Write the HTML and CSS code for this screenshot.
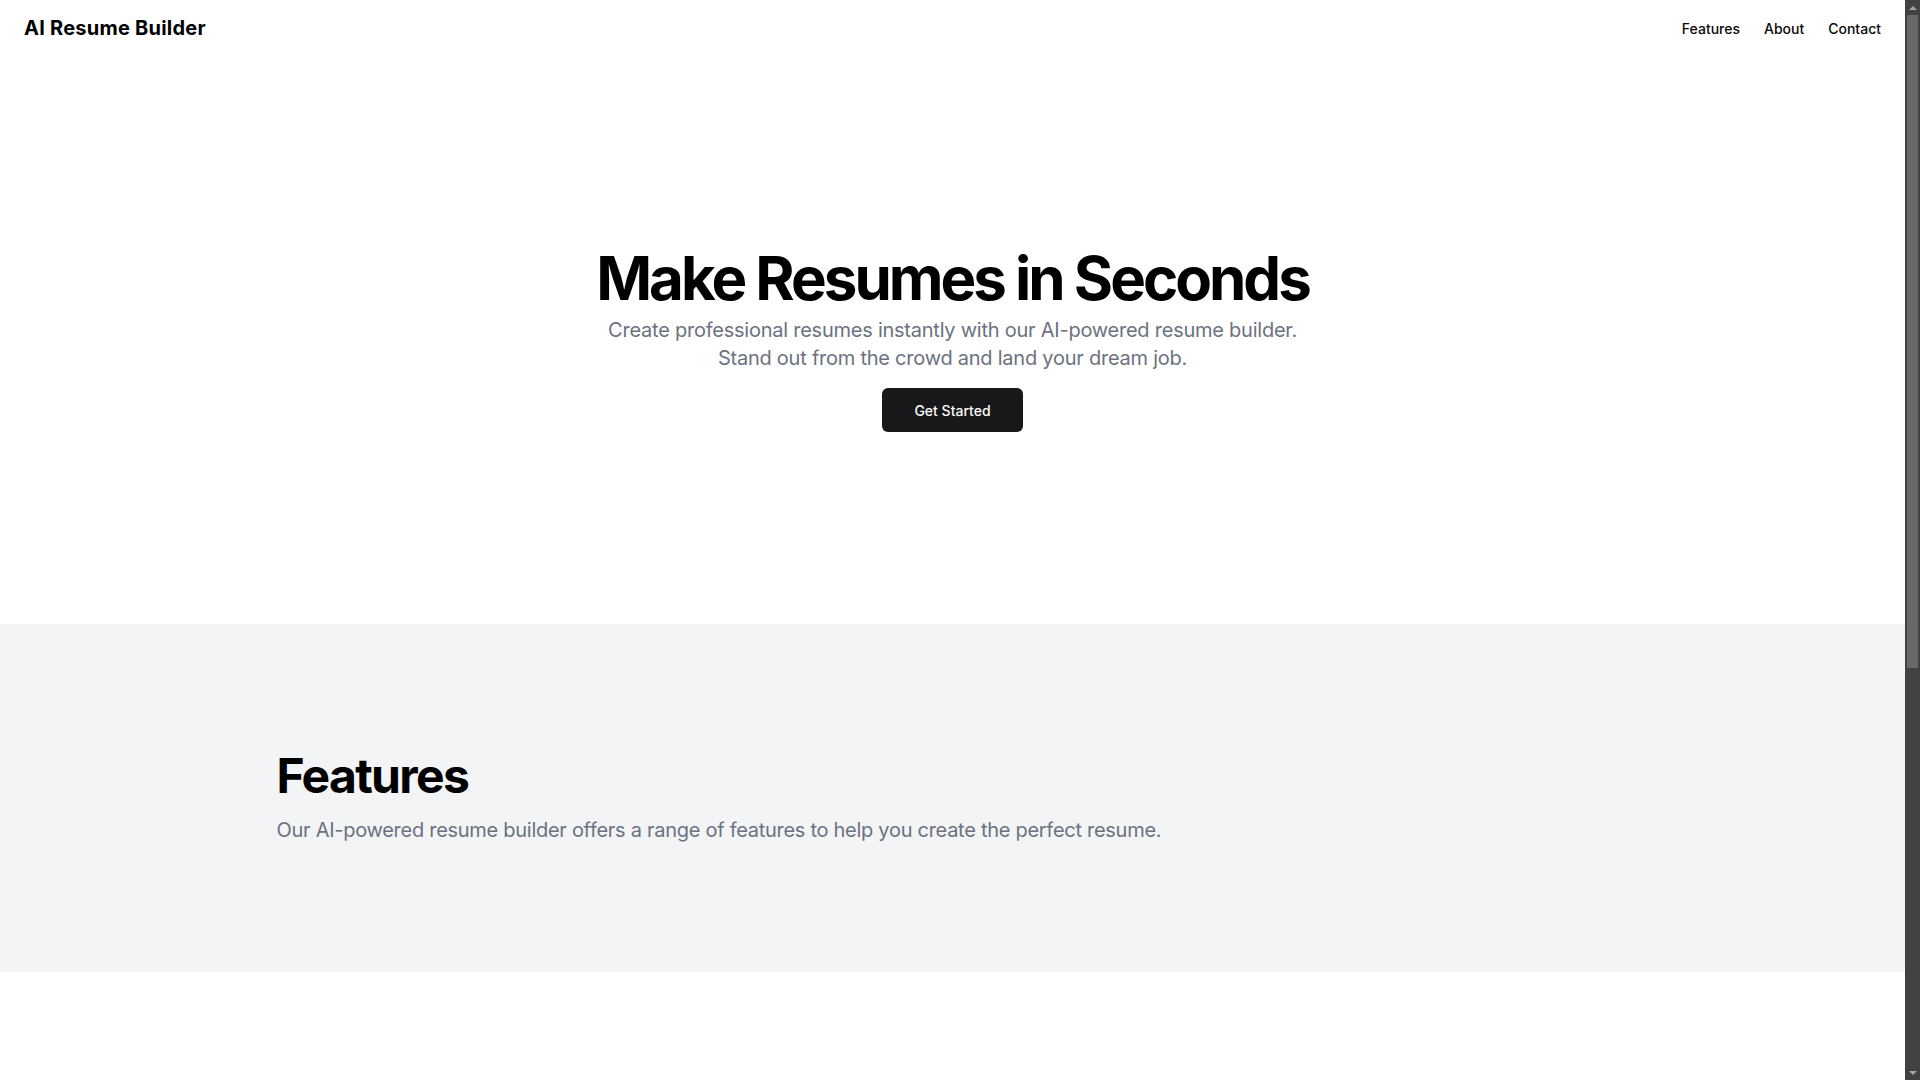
FILE: index.html
```html
<!DOCTYPE html>
<html lang="en">
<head>
<meta charset="utf-8">
<title>AI Resume Builder</title>
<link rel="stylesheet" href="styles.css">
</head>
<body>
<header class="site-header">
  <a class="logo" href="#">AI Resume Builder</a>
  <nav class="nav">
    <a href="#features">Features</a>
    <a href="#about">About</a>
    <a href="#contact">Contact</a>
  </nav>
</header>
<main>
  <section class="hero">
    <div class="container hero-inner">
      <div class="hero-text">
        <h1>Make Resumes in Seconds</h1>
        <p>Create professional resumes instantly with our AI-powered resume builder. Stand out from the crowd and land your dream job.</p>
      </div>
      <a class="btn" href="#">Get Started</a>
    </div>
  </section>
  <section class="features" id="features">
    <div class="container features-inner">
      <h2>Features</h2>
      <p>Our AI-powered resume builder offers a range of features to help you create the perfect resume.</p>
    </div>
  </section>
  <section class="about" id="about"></section>
</main>
<div class="scrollbar" aria-hidden="true">
  <div class="sb-arrow sb-up"></div>
  <div class="sb-track">
    <div class="sb-thumb"></div>
  </div>
  <div class="sb-arrow sb-down"></div>
</div>
</body>
</html>
```
FILE: styles.css
```css
* { box-sizing: border-box; }
html {
  background: #fff;
}
html, body { margin: 0; padding: 0; }
body {
  font-family: Inter, "Noto Sans", sans-serif;
  color: #09090b;
  background: #fff;
  margin-right: 15px;
}
a { color: inherit; text-decoration: none; }
.site-header {
  height: 56px;
  display: flex;
  align-items: center;
  padding: 0 24px;
}
.logo {
  font-size: 20px;
  font-weight: 700;
  letter-spacing: 0.012em;
  color: #000;
}
.nav {
  margin-left: auto;
  display: flex;
  gap: 24px;
}
.nav a {
  font-size: 14px;
  font-weight: 500;
  color: #09090b;
}
.container {
  max-width: 1400px;
  margin: 0 auto;
  padding: 0 24px;
}
.hero {
  padding: 192px 0;
}
.hero-inner {
  display: flex;
  flex-direction: column;
  align-items: center;
  gap: 16px;
  text-align: center;
}
.hero-text {
  display: flex;
  flex-direction: column;
  align-items: center;
  gap: 8px;
}
.hero h1 {
  margin: 0;
  font-size: 60px;
  line-height: 1;
  font-weight: 700;
  letter-spacing: -0.05em;
  color: #000;
}
.hero p {
  margin: 0;
  max-width: 700px;
  font-size: 20px;
  line-height: 28px;
  letter-spacing: -0.012em;
  color: #6b7280;
}
.btn {
  display: inline-flex;
  align-items: center;
  justify-content: center;
  height: 44px;
  padding: 0 32px;
  border-radius: 6px;
  background: #18181b;
  color: #fafafa;
  font-size: 14px;
  font-weight: 500;
}
.features {
  background: #f3f4f6;
  padding: 128px 0;
}
.features-inner {
  display: flex;
  flex-direction: column;
  gap: 16px;
}
.features h2 {
  margin: 0;
  font-size: 48px;
  line-height: 1;
  font-weight: 700;
  letter-spacing: -0.035em;
  color: #000;
}
.features p {
  margin: 0;
  max-width: 900px;
  font-size: 20px;
  line-height: 28px;
  letter-spacing: -0.014em;
  color: #6b7280;
}
.about {
  height: 764px;
  background: #fff;
}

/* simulated browser scrollbar */
.scrollbar {
  position: fixed;
  top: 0;
  right: 0;
  bottom: 0;
  width: 15px;
  background: #424242;
  display: flex;
  flex-direction: column;
}
.sb-arrow {
  height: 15px;
  flex: none;
  display: flex;
  justify-content: center;
  align-items: center;
}
.sb-up::before,
.sb-down::before {
  content: "";
  width: 0;
  height: 0;
  border-left: 4px solid transparent;
  border-right: 4px solid transparent;
}
.sb-up::before {
  border-bottom: 4px solid #a3a3a3;
}
.sb-down::before {
  border-top: 4px solid #a3a3a3;
}
.sb-track {
  flex: 1;
  padding: 0 2px;
}
.sb-thumb {
  height: 653px;
  background: #686868;
}
```
